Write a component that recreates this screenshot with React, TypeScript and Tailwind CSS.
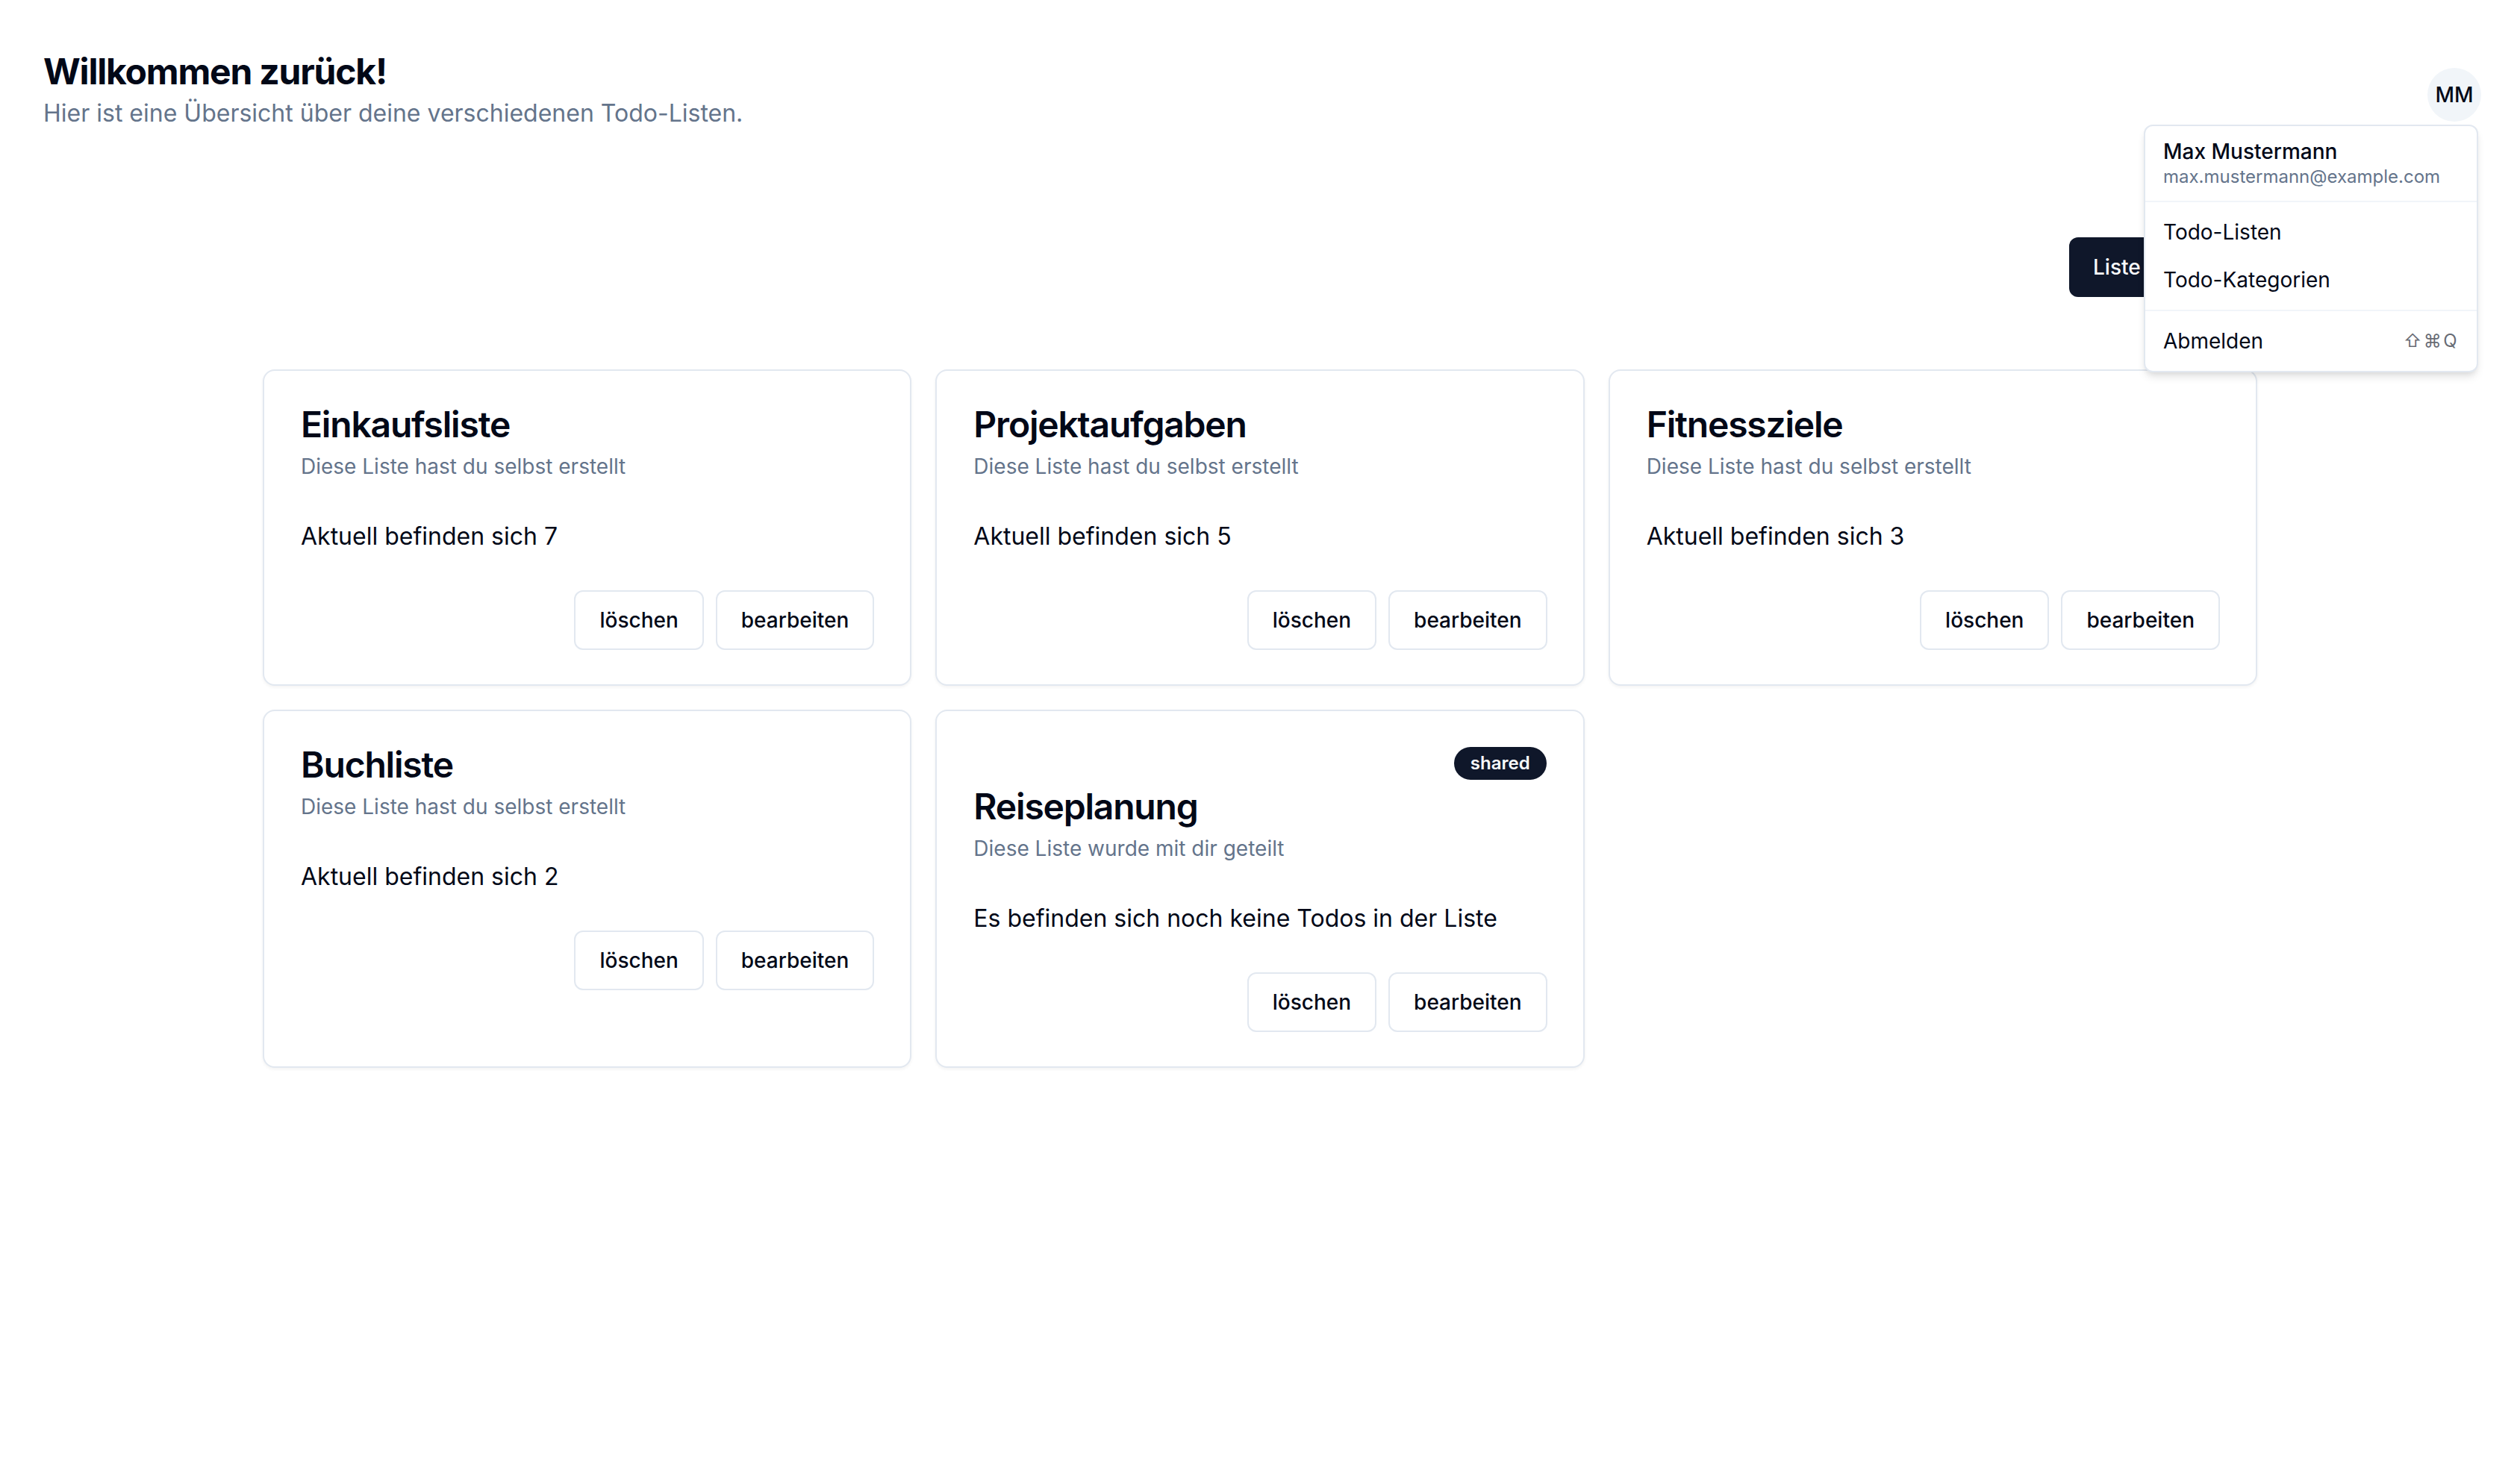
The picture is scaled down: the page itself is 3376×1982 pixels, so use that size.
import React from "react";

type Card = {
  title: string;
  desc: string;
  content: string;
  shared?: boolean;
};

const cards: Card[] = [
  { title: "Einkaufsliste", desc: "Diese Liste hast du selbst erstellt", content: "Aktuell befinden sich 7" },
  { title: "Projektaufgaben", desc: "Diese Liste hast du selbst erstellt", content: "Aktuell befinden sich 5" },
  { title: "Fitnessziele", desc: "Diese Liste hast du selbst erstellt", content: "Aktuell befinden sich 3" },
  { title: "Buchliste", desc: "Diese Liste hast du selbst erstellt", content: "Aktuell befinden sich 2" },
  {
    title: "Reiseplanung",
    desc: "Diese Liste wurde mit dir geteilt",
    content: "Es befinden sich noch keine Todos in der Liste",
    shared: true,
  },
];

function OutlineButton({ children }: { children: React.ReactNode }) {
  return (
    <button className="flex h-[80px] items-center justify-center rounded-[12px] border-2 border-[#e2e8f0] bg-white px-[32px] text-[28px] font-medium text-[#020817]">
      {children}
    </button>
  );
}

function ListCard({ card }: { card: Card }) {
  return (
    <div className="flex flex-col rounded-[16px] border-2 border-[#e2e8f0] bg-white text-[#020817] shadow-[0_2px_4px_0_rgba(0,0,0,0.05)]">
      <div className="flex flex-col gap-[12px] px-[49px] pb-[48px] pt-[48px]">
        {card.shared && (
          <div className="flex justify-end">
            <span className="inline-flex items-center rounded-full border-2 border-transparent bg-[#0f172a] px-[20px] py-[4px] text-[24px] font-semibold leading-[32px] text-[#f8fafc]">
              shared
            </span>
          </div>
        )}
        <h3 className="text-[48px] font-semibold leading-none tracking-[-0.025em]">{card.title}</h3>
        <p className="text-[28px] leading-[40px] text-[#64748b]">{card.desc}</p>
      </div>
      <div className="px-[49px] pb-[48px] pt-[2px]">
        <p className="text-[32px] leading-[48px]">{card.content}</p>
      </div>
      <div className="flex items-center justify-end gap-[16px] px-[48px] pb-[46px]">
        <OutlineButton>löschen</OutlineButton>
        <OutlineButton>bearbeiten</OutlineButton>
      </div>
    </div>
  );
}

export default function App() {
  return (
    <div className="relative min-h-[1982px] bg-white font-['Inter',sans-serif] text-[#020817]">
      <header className="flex items-start justify-between pl-[58px] pr-[52px] pt-[64px]">
        <div className="flex flex-col">
          <h1 className="text-[48px] font-bold leading-[64px] tracking-[-0.025em]">Willkommen zurück!</h1>
          <p className="text-[32px] leading-[48px] text-[#64748b]">
            Hier ist eine Übersicht über deine verschiedenen Todo-Listen.
          </p>
        </div>
        <div className="mt-[27px] flex h-[72px] w-[72px] items-center justify-center rounded-full bg-[#f1f5f9] text-[28px] font-medium">
          MM
        </div>
      </header>

      <main className="mx-auto w-[2672px]">
        <div className="mt-[142px] flex justify-end">
          <button className="flex h-[80px] w-[252px] items-center justify-start whitespace-nowrap rounded-[12px] bg-[#0f172a] px-[32px] text-[28px] font-medium text-[#f8fafc]">
            Liste erstellen
          </button>
        </div>
        <div className="mt-[97px] grid grid-cols-3 gap-[32px]">
          {cards.map((c) => (
            <ListCard key={c.title} card={c} />
          ))}
        </div>
      </main>

      <div className="absolute right-[56px] top-[167px] w-[448px] rounded-[12px] border-2 border-[#e2e8f0] bg-white p-[8px] text-[#020817] shadow-[0_8px_12px_-2px_rgba(0,0,0,0.1),0_4px_8px_-4px_rgba(0,0,0,0.1)]">
        <div className="flex flex-col gap-[8px] px-[16px] py-[12px]">
          <p className="text-[28px] font-medium leading-none">Max Mustermann</p>
          <p className="text-[24px] leading-none text-[#64748b]">max.mustermann@example.com</p>
        </div>
        <div className="-mx-[8px] my-[8px] h-[2px] bg-[#f1f5f9]" />
        <div className="flex items-center rounded-[4px] px-[16px] py-[12px] text-[28px] leading-[40px]">Todo-Listen</div>
        <div className="flex items-center rounded-[4px] px-[16px] py-[12px] text-[28px] leading-[40px]">Todo-Kategorien</div>
        <div className="-mx-[8px] my-[8px] h-[2px] bg-[#f1f5f9]" />
        <div className="flex items-center rounded-[4px] px-[16px] py-[12px] text-[28px] leading-[40px]">
          <span>Abmelden</span>
          <span className="ml-auto text-[24px] tracking-[0.1em] opacity-60">⇧⌘Q</span>
        </div>
      </div>
    </div>
  );
}
